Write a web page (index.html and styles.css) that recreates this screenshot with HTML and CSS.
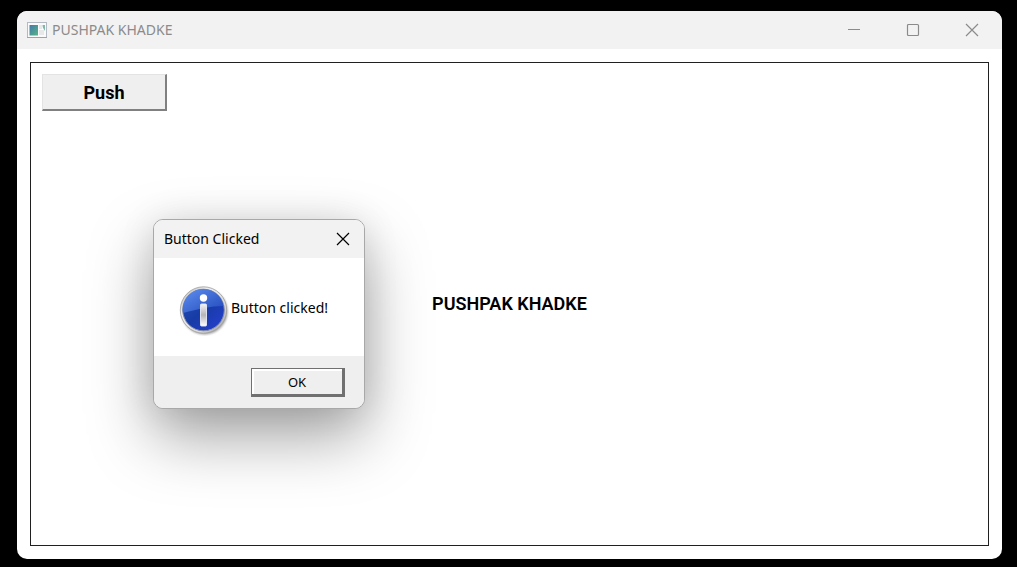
FILE: index.html
```html
<!DOCTYPE html>
<html lang="en">
<head>
<meta charset="utf-8">
<meta name="viewport" content="width=device-width, initial-scale=1">
<title>PUSHPAK KHADKE</title>
<link rel="stylesheet" href="styles.css">
</head>
<body>
<main class="window">
  <header class="titlebar">
    <svg class="app-icon" viewBox="0 0 20 16" aria-hidden="true">
      <defs>
        <linearGradient id="pane" x1="0" y1="0" x2="1" y2="1"><stop offset="0" stop-color="#4379a8"/><stop offset="1" stop-color="#55b585"/></linearGradient>
      </defs>
      <rect x=".5" y=".5" width="19" height="15" fill="#fafafb" stroke="#b4bac3"/>
      <path d="M0 15.500h20" stroke="#9ba3ae"/>
      <rect x="2.500" y="3" width="8.500" height="10.500" fill="url(#pane)"/>
      <path d="M12 3h3v4h-3zM12 8h5v5h-5z" fill="#e6e8ea"/>
      <path d="M15.500 3h2.500v6c-1-2-2.500-3-2.500-6z" fill="#7fb9a6"/>
    </svg>
    <h1 class="title">PUSHPAK KHADKE</h1>
    <div class="controls">
      <button class="control" type="button" aria-label="Minimize"><svg viewBox="0 0 14 14"><path d="M1 6.500h12"/></svg></button>
      <button class="control" type="button" aria-label="Maximize"><svg viewBox="0 0 14 14"><rect x="1.500" y="1.500" width="11" height="11" rx="1"/></svg></button>
      <button class="control" type="button" aria-label="Close"><svg viewBox="0 0 14 14"><path d="M1 1l12 12M13 1L1 13"/></svg></button>
    </div>
  </header>
  <section class="client">
    <div class="frame">
      <button class="push" type="button">Push</button>
      <p class="name">PUSHPAK KHADKE</p>
    </div>
  </section>
</main>
<div class="dialog" role="dialog" aria-labelledby="dialog-title">
  <div class="dialog-bar">
    <h2 class="dialog-title" id="dialog-title">Button Clicked</h2>
    <button class="dialog-close" type="button" aria-label="Close"><svg viewBox="0 0 14 14"><path d="M1 1l12 12M13 1L1 13"/></svg></button>
  </div>
  <div class="dialog-body">
    <svg class="info" viewBox="0 0 50 50" aria-hidden="true">
      <defs>
        <linearGradient id="ring" x1="0" y1="0" x2="1" y2="1"><stop offset="0" stop-color="#a5a5a5"/><stop offset=".3" stop-color="#efefef"/><stop offset=".7" stop-color="#d8d8d8"/><stop offset="1" stop-color="#8d8d8d"/></linearGradient>
        <linearGradient id="disc" x1="0" y1="0" x2="1" y2="1"><stop offset="0" stop-color="#2450b4"/><stop offset=".5" stop-color="#173ba6"/><stop offset="1" stop-color="#2740d2"/></linearGradient>
        <linearGradient id="gloss" x1="0" y1="0" x2="1" y2="1"><stop offset="0" stop-color="#5f8fee"/><stop offset="1" stop-color="#2048ba"/></linearGradient>
        <linearGradient id="stem" x1="0" y1="0" x2="0" y2="1"><stop offset="0" stop-color="#f4f4f4"/><stop offset=".5" stop-color="#b5b5b9"/><stop offset="1" stop-color="#ffffff"/></linearGradient>
        <filter id="soft" x="-20%" y="-20%" width="140%" height="140%"><feGaussianBlur stdDeviation="1"/></filter>
      </defs>
      <circle cx="25.500" cy="25.500" r="23" fill="#777" opacity=".7" filter="url(#soft)"/>
      <circle cx="24.500" cy="24" r="23.200" fill="url(#ring)" stroke="#a0a0a0" stroke-width=".8"/>
      <circle cx="24.500" cy="24" r="20.800" fill="url(#disc)" stroke="#8890a8" stroke-width="1"/>
      <path d="M4 27A20.500 20.500 0 0 1 44.500 20C31 20 20 23 4 27z" fill="url(#gloss)"/>
      <circle cx="24.500" cy="12" r="3.700" fill="#fff"/>
      <rect x="21.500" y="18" width="6" height="22" rx="1" fill="url(#stem)" stroke="#e9edf8" stroke-width=".9"/>
    </svg>
    <p class="message">Button clicked!</p>
  </div>
  <div class="dialog-actions">
    <button class="ok" type="button">OK</button>
  </div>
</div>
</body>
</html>
```

FILE: styles.css
```css
* { box-sizing: border-box; }

body {
  margin: 0;
  min-height: 100vh;
  display: flex;
  padding: 11px 15px 8px 17px;
  background: #000;
  font-family: "Noto Sans", sans-serif;
  color: #000;
}

h1, h2, p { margin: 0; font-weight: 400; }

button { font-family: inherit; color: inherit; padding: 0; }

.window {
  flex: 1;
  display: flex;
  flex-direction: column;
  border-radius: 10px;
  overflow: hidden;
  background: #fff;
}

.titlebar {
  display: flex;
  align-items: center;
  height: 38px;
  padding-left: 10px;
  background: #f2f2f2;
  color: #8b8b8b;
}

.app-icon { width: 20px; height: 16px; margin-right: 5px; }

.title { flex: 1; font-size: 14px; line-height: 20px; }

.controls { display: flex; align-self: stretch; padding-right: 1px; }

.control {
  display: grid;
  place-items: center;
  width: 59px;
  border: 0;
  background: none;
}

.control svg, .dialog-close svg {
  width: 14px;
  height: 14px;
  fill: none;
  stroke: currentColor;
  stroke-width: 1.2;
}

.client { flex: 1; display: flex; padding: 13px; }

.frame {
  flex: 1;
  display: grid;
  grid-template-rows: 37px 1fr 37px;
  padding: 11px;
  border: 1px solid #202020;
}

.push {
  justify-self: start;
  width: 125px;
  border: 1px solid #e3e3e3;
  border-right: 2px solid #808080;
  border-bottom: 2px solid #808080;
  background: #efefef;
  font-family: "Roboto", sans-serif;
  font-size: 18px;
  font-weight: 700;
}

.name {
  place-self: center;
  font-family: "Roboto", sans-serif;
  font-size: 18px;
  font-weight: 600;
  line-height: 24px;
}

.dialog {
  position: absolute;
  left: 153px;
  top: 219px;
  width: 212px;
  border: 1px solid #a8a8a8;
  border-radius: 10px;
  background: #fff;
  background-clip: padding-box;
  box-shadow: 0 28px 64px rgba(0, 0, 0, .36), 0 2px 36px rgba(0, 0, 0, .1);
}

.dialog-bar {
  display: flex;
  align-items: center;
  justify-content: space-between;
  height: 38px;
  padding-left: 10px;
  border-radius: 9px 9px 0 0;
  background: #f2f2f2;
}

.dialog-title { font-size: 14px; line-height: 20px; }

.dialog-close {
  display: grid;
  place-items: center;
  width: 42px;
  height: 38px;
  border: 0;
  background: none;
}

.dialog-body {
  display: flex;
  align-items: center;
  gap: 2px;
  height: 98px;
  padding: 8px 0 0 25px;
}

.info { width: 50px; height: 50px; }

.message { padding-bottom: 6px; font-size: 14px; line-height: 20px; }

.dialog-actions {
  display: flex;
  justify-content: flex-end;
  padding: 12px 19px 11px;
  border-radius: 0 0 9px 9px;
  background: #efefef;
}

.ok {
  width: 94px;
  height: 29px;
  border: 1px solid #707070;
  border-right: 3px solid #707070;
  border-bottom: 3px solid #707070;
  background: #efefef;
  box-shadow: inset 2px 2px 0 #fff;
  font-size: 13px;
}
```
